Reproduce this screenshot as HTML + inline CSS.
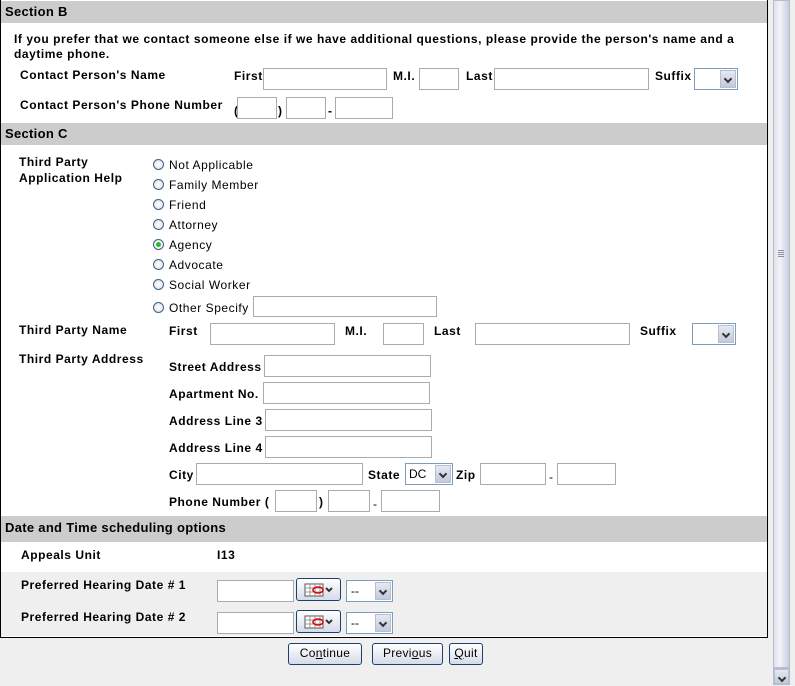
<!DOCTYPE html>
<html><head><meta charset="utf-8"><style>
body{margin:0;width:795px;height:686px;background:#efefef;position:relative;overflow:hidden;font-family:"Liberation Sans",Arial,sans-serif;font-size:12px;color:#000;letter-spacing:0.55px}
.a{position:absolute;white-space:nowrap}
.b{font-weight:bold}
.bar{position:absolute;left:1px;width:766px;background:#cccccc;font-weight:bold;font-size:13px;letter-spacing:0.3px}
.bar span{position:absolute;left:4px}
.in{position:absolute;background:#fff;border:1px solid #a5acb2;box-sizing:border-box}
.sel{position:absolute;background:#fff;border:1px solid #7f9db9;box-sizing:border-box;font-size:12px;letter-spacing:0}
.sel i{position:absolute;right:1px;top:1px;bottom:1px;width:16px;background:linear-gradient(#e6e9f2,#c3c9dc);border:1px solid #b5bfd6;box-sizing:border-box}
.sel i:after{content:"";position:absolute;left:4px;top:5px;width:4px;height:4px;border-right:2px solid #333;border-bottom:2px solid #333;transform:rotate(45deg)}
.r{position:absolute;width:11px;height:11px;border:1px solid #3f5f89;border-radius:50%;background:radial-gradient(#fff,#dcdcdc);box-sizing:border-box}
.btn{position:absolute;border:1px solid #1c3f6e;border-radius:3px;background:linear-gradient(#fff,#d6dbe9);box-sizing:border-box;text-align:center;font-size:12px;line-height:19px;letter-spacing:0.3px}
</style></head><body>
<div style="position:absolute;left:0;top:0;width:768px;height:638px;background:#fff;border:1px solid #000;border-top:none;box-sizing:border-box"></div>
<div style="position:absolute;left:1px;top:572px;width:766px;height:64px;background:#efefef"></div>
<div class="bar" style="top:1px;height:22px"><span style="top:3px">Section B</span></div>
<div class="a b" style="left:14px;top:32px">If you prefer that we contact someone else if we have additional questions, please provide the person's name and a</div>
<div class="a b" style="left:14px;top:47px">daytime phone.</div>
<div class="a b" style="left:20px;top:68px">Contact Person's Name</div>
<div class="a b" style="left:234px;top:69px">First</div><div class="in" style="left:263px;top:68px;width:124px;height:22px"></div>
<div class="a b" style="left:393px;top:69px">M.I.</div><div class="in" style="left:419px;top:68px;width:40px;height:22px"></div>
<div class="a b" style="left:466px;top:69px">Last</div><div class="in" style="left:494px;top:68px;width:155px;height:22px"></div>
<div class="a b" style="left:655px;top:69px">Suffix</div><div class="sel" style="left:694px;top:68px;width:44px;height:22px"><i></i></div>
<div class="a b" style="left:20px;top:98px">Contact Person's Phone Number</div>
<div class="a b" style="left:234px;top:104px">(</div><div class="in" style="left:237px;top:97px;width:40px;height:22px"></div>
<div class="a b" style="left:278px;top:104px">)</div><div class="in" style="left:286px;top:97px;width:40px;height:22px"></div>
<div class="a b" style="left:328px;top:104px">-</div><div class="in" style="left:335px;top:97px;width:58px;height:22px"></div>
<div class="bar" style="top:123px;height:22px"><span style="top:3px">Section C</span></div>
<div class="a b" style="left:19px;top:155px">Third Party</div>
<div class="a b" style="left:19px;top:171px">Application Help</div>
<div class="r" style="left:153px;top:159px"></div><div class="a" style="left:169px;top:158px">Not Applicable</div>
<div class="r" style="left:153px;top:179px"></div><div class="a" style="left:169px;top:178px">Family Member</div>
<div class="r" style="left:153px;top:199px"></div><div class="a" style="left:169px;top:198px">Friend</div>
<div class="r" style="left:153px;top:219px"></div><div class="a" style="left:169px;top:218px">Attorney</div>
<div class="r" style="left:153px;top:239px;background:radial-gradient(#2fb52f 0,#2fb52f 2px,#fff 3px,#dcdcdc)"></div><div class="a" style="left:169px;top:238px">Agency</div>
<div class="r" style="left:153px;top:259px"></div><div class="a" style="left:169px;top:258px">Advocate</div>
<div class="r" style="left:153px;top:279px"></div><div class="a" style="left:169px;top:278px">Social Worker</div>
<div class="r" style="left:153px;top:302px"></div><div class="a" style="left:169px;top:301px">Other Specify</div>
<div class="in" style="left:253px;top:296px;width:184px;height:21px"></div>
<div class="a b" style="left:19px;top:323px">Third Party Name</div>
<div class="a b" style="left:169px;top:324px">First</div><div class="in" style="left:210px;top:323px;width:125px;height:22px"></div>
<div class="a b" style="left:345px;top:324px">M.I.</div><div class="in" style="left:383px;top:323px;width:41px;height:22px"></div>
<div class="a b" style="left:434px;top:324px">Last</div><div class="in" style="left:475px;top:323px;width:155px;height:22px"></div>
<div class="a b" style="left:640px;top:324px">Suffix</div><div class="sel" style="left:692px;top:323px;width:44px;height:22px"><i></i></div>
<div class="a b" style="left:19px;top:352px">Third Party Address</div>
<div class="a b" style="left:169px;top:360px">Street Address</div><div class="in" style="left:264px;top:355px;width:167px;height:22px"></div>
<div class="a b" style="left:169px;top:387px">Apartment No.</div><div class="in" style="left:263px;top:382px;width:167px;height:22px"></div>
<div class="a b" style="left:169px;top:414px">Address Line 3</div><div class="in" style="left:265px;top:409px;width:167px;height:22px"></div>
<div class="a b" style="left:169px;top:441px">Address Line 4</div><div class="in" style="left:265px;top:436px;width:167px;height:22px"></div>
<div class="a b" style="left:169px;top:468px">City</div><div class="in" style="left:196px;top:463px;width:167px;height:22px"></div>
<div class="a b" style="left:368px;top:468px">State</div><div class="sel" style="left:405px;top:463px;width:48px;height:22px"><span style="position:absolute;left:3px;top:3px">DC</span><i></i></div>
<div class="a b" style="left:456px;top:468px">Zip</div><div class="in" style="left:480px;top:463px;width:66px;height:22px"></div>
<div class="a" style="left:549px;top:470px">-</div><div class="in" style="left:557px;top:463px;width:59px;height:22px"></div>
<div class="a b" style="left:169px;top:495px">Phone Number (</div><div class="in" style="left:275px;top:490px;width:42px;height:22px"></div>
<div class="a b" style="left:319px;top:495px">)</div><div class="in" style="left:328px;top:490px;width:42px;height:22px"></div>
<div class="a" style="left:373px;top:497px">-</div><div class="in" style="left:381px;top:490px;width:59px;height:22px"></div>
<div class="bar" style="top:516px;height:26px"><span style="top:4px">Date and Time scheduling options</span></div>
<div class="a b" style="left:21px;top:548px">Appeals Unit</div>
<div class="a b" style="left:217px;top:548px">I13</div>
<div class="a b" style="left:21px;top:578px">Preferred Hearing Date # 1</div>
<div class="in" style="left:217px;top:580px;width:77px;height:22px"></div>
<div class="btn" style="left:296px;top:578px;width:45px;height:23px"><svg width="43" height="21" style="position:absolute;left:0;top:0"><rect x="8" y="5" width="18" height="12" fill="#fff" stroke="#555"/><path d="M8 9H26M8 13H26M13 5V17M18 5V17M23 5V17" stroke="#999"/><ellipse cx="21" cy="11" rx="5" ry="3" fill="none" stroke="#d00" stroke-width="1.5"/><path d="M29 9l3 3 3-3" stroke="#333" stroke-width="2" fill="none"/></svg></div>
<div class="sel" style="left:346px;top:580px;width:47px;height:22px"><span style="position:absolute;left:4px;top:3px">--</span><i></i></div>
<div class="a b" style="left:21px;top:610px">Preferred Hearing Date # 2</div>
<div class="in" style="left:217px;top:612px;width:77px;height:22px"></div>
<div class="btn" style="left:296px;top:610px;width:45px;height:23px"><svg width="43" height="21" style="position:absolute;left:0;top:0"><rect x="8" y="5" width="18" height="12" fill="#fff" stroke="#555"/><path d="M8 9H26M8 13H26M13 5V17M18 5V17M23 5V17" stroke="#999"/><ellipse cx="21" cy="11" rx="5" ry="3" fill="none" stroke="#d00" stroke-width="1.5"/><path d="M29 9l3 3 3-3" stroke="#333" stroke-width="2" fill="none"/></svg></div>
<div class="sel" style="left:346px;top:612px;width:47px;height:22px"><span style="position:absolute;left:4px;top:3px">--</span><i></i></div>
<div class="btn" style="left:288px;top:643px;width:74px;height:22px">Co<u>n</u>tinue</div>
<div class="btn" style="left:372px;top:643px;width:71px;height:22px">Previ<u>o</u>us</div>
<div class="btn" style="left:449px;top:643px;width:34px;height:22px"><u>Q</u>uit</div>
<div style="position:absolute;left:773px;top:0;width:17px;height:668px;border:1px solid #b5bcd0;box-sizing:border-box;background:linear-gradient(90deg,#dfe2ec,#f2f3f8 40%,#c9cde0)"></div>
<div style="position:absolute;left:778px;top:250px;width:6px;height:7px;background:repeating-linear-gradient(#8890a8 0 1px,transparent 1px 2px)"></div>
<div class="sel" style="left:773px;top:668px;width:17px;height:17px;border-color:#b5bcd0"><i style="right:0;top:0;bottom:0;width:15px"></i></div>
</body></html>
